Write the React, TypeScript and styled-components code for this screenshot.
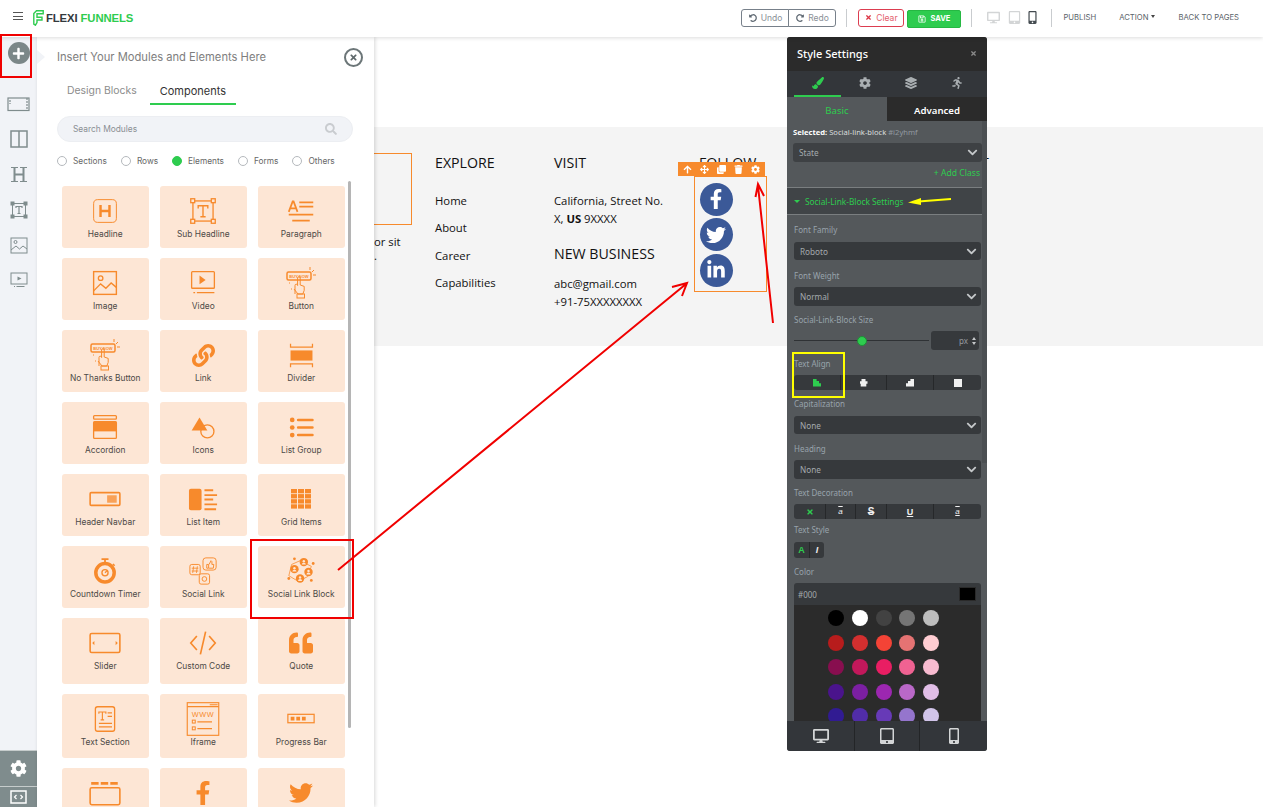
import React from "react";
import styled, { createGlobalStyle } from "styled-components";
import {
  FaArrowUp,
  FaArrowsAlt,
  FaChevronDown,
  FaClone,
  FaCog,
  FaDesktop,
  FaFacebookF,
  FaLayerGroup,
  FaLink,
  FaLinkedinIn,
  FaMobileAlt,
  FaPaintBrush,
  FaPlus,
  FaQuoteLeft,
  FaRedoAlt,
  FaRegSave,
  FaRunning,
  FaSearch,
  FaTabletAlt,
  FaTimes,
  FaTrash,
  FaTwitter,
  FaUndoAlt,
} from "react-icons/fa";

const ORANGE = "#f78a2c";
const GREEN = "#2ecc4f";
const GREY = "#7f8c8d";

const GlobalStyle = createGlobalStyle`
  html, body {
    margin: 0;
    padding: 0;
    background: #ffffff;
  }
  * {
    box-sizing: border-box;
  }
`;

const Page = styled.div`
  position: relative;
  width: 1263px;
  height: 807px;
  overflow: hidden;
  display: flex;
  flex-direction: column;
  font-family: Inter, "Liberation Sans", sans-serif;
`;

/* top bar */
const TopBar = styled.header`
  height: 37px;
  flex: none;
  display: flex;
  align-items: center;
  background: #ffffff;
  padding: 0 24px 2px 13px;
  box-shadow: 0 1px 4px rgba(0, 0, 0, 0.14);
  position: relative;
  z-index: 3;
`;

const Burger = styled.div`
  width: 10px;
  height: 8px;
  border-top: 1px solid #555;
  border-bottom: 1px solid #555;
  position: relative;
  margin-top: -3px;
  &::after {
    content: "";
    position: absolute;
    left: 0;
    right: 0;
    top: 2.5px;
    height: 1px;
    background: #555;
  }
`;

const Logo = styled.div`
  display: flex;
  align-items: center;
  margin: 1px 0 0 10px;
  gap: 2px;
  font-family: "Liberation Sans", sans-serif;
  font-weight: 700;
  font-size: 11.3px;
  color: #33393d;
  letter-spacing: -0.1px;
`;

const LogoGreen = styled.span`
  color: ${GREEN};
`;

const TopActions = styled.div`
  margin-left: auto;
  display: flex;
  align-items: center;
`;

const HistoryButton = styled.button<{ $right?: boolean }>`
  width: 48px;
  height: 18px;
  border: 1px solid #77808a;
  border-radius: ${(p) => (p.$right ? "0 3px 3px 0" : "3px 0 0 3px")};
  background: #fff;
  color: #8a9097;
  font-family: inherit;
  font-size: 8.5px;
  display: flex;
  align-items: center;
  justify-content: center;
  gap: 4px;
  padding: 0;
  margin-left: ${(p) => (p.$right ? "-1px" : "0")};
  svg {
    color: #5c6670;
    font-size: 8px;
  }
`;

const Sep = styled.div<{ $left: number }>`
  width: 1px;
  height: 18px;
  background: #c9cccf;
  margin-left: ${(p) => p.$left}px;
`;

const ClearButton = styled.button`
  width: 46px;
  height: 18px;
  margin-left: 11px;
  border: 1px solid #dc3d50;
  border-radius: 3px;
  background: #fff;
  color: #e4606d;
  font-family: inherit;
  font-size: 8.5px;
  display: flex;
  align-items: center;
  justify-content: center;
  gap: 4px;
  padding: 0;
  svg {
    color: #dc3545;
    font-size: 7px;
  }
`;

const SaveButton = styled.button`
  width: 54px;
  height: 18px;
  margin: 2px 0 0 3px;
  border: 1px solid #26b843;
  border-radius: 2px;
  background: ${GREEN};
  color: #fff;
  font-family: inherit;
  font-weight: 700;
  font-size: 7.5px;
  display: flex;
  align-items: center;
  justify-content: center;
  gap: 4px;
  padding: 0;
  svg {
    font-size: 8px;
  }
`;

const DeviceSlot = styled.div<{ $left: number; $on?: boolean }>`
  margin-left: ${(p) => p.$left}px;
  display: flex;
  color: ${(p) => (p.$on ? "#444b50" : "#d3d5d6")};
  font-size: 13px;
`;

const TopLink = styled.a<{ $left: number }>`
  margin-left: ${(p) => p.$left}px;
  font-size: 7.7px;
  color: #5a6268;
  white-space: nowrap;
`;

const Caret = styled.span`
  display: inline-block;
  margin: 0 0 2px 2px;
  border-left: 2.5px solid transparent;
  border-right: 2.5px solid transparent;
  border-top: 3px solid #444;
`;

/* workspace */
const Workspace = styled.div`
  flex: 1;
  display: flex;
  min-height: 0;
`;

const Rail = styled.nav`
  width: 37px;
  flex: none;
  background: #f1f3f7;
  display: flex;
  flex-direction: column;
  align-items: center;
`;

const PlusCircle = styled.div`
  width: 22px;
  height: 22px;
  margin-top: 5px;
  border-radius: 50%;
  background: #7b8788;
  color: #fff;
  font-size: 13px;
  display: flex;
  align-items: center;
  justify-content: center;
`;

const RailIcons = styled.div`
  margin-top: 33px;
  height: 191px;
  display: flex;
  flex-direction: column;
  align-items: center;
  justify-content: space-between;
`;

const RailFooter = styled.div`
  margin-top: auto;
  width: 100%;
`;

const RailButton = styled.div<{ $h: number }>`
  height: ${(p) => p.$h}px;
  background: ${GREY};
  border-top: 1px solid #c6cccc;
  color: #fff;
  display: flex;
  align-items: center;
  justify-content: center;
  font-size: 17px;
`;

const ModulePanel = styled.aside`
  width: 337px;
  flex: none;
  position: relative;
  background: #ffffff;
  box-shadow: 1px 0 4px rgba(0, 0, 0, 0.16);
  z-index: 2;
  padding: 10px 0 0 20px;
  &::before {
    content: "";
    position: absolute;
    left: 0;
    top: 13px;
    border-left: 8px solid #f1f3f7;
    border-top: 7px solid transparent;
    border-bottom: 7px solid transparent;
  }
`;

const PanelHead = styled.div`
  height: 20px;
  width: 297px;
  display: flex;
  align-items: center;
  justify-content: space-between;
  font-size: 11.2px;
  color: #7e7e7e;
`;

const CloseCircle = styled.div`
  width: 19px;
  height: 19px;
  border: 2px solid #6c7678;
  border-radius: 50%;
  color: #5f696b;
  font-size: 9px;
  display: flex;
  align-items: center;
  justify-content: center;
  margin-right: -9px;
`;

const Tabs = styled.div`
  display: flex;
  gap: 3px;
  margin-top: 13px;
  height: 25px;
`;

const Tab = styled.div<{ $active?: boolean }>`
  padding: 4px 10px 0;
  font-size: ${(p) => (p.$active ? 11 : 10.4)}px;
  color: ${(p) => (p.$active ? "#333" : "#8c8c8c")};
  border-bottom: 2px solid ${(p) => (p.$active ? GREEN : "transparent")};
`;

const SearchBox = styled.div`
  margin-top: 11px;
  width: 296px;
  height: 26px;
  border-radius: 13px;
  background: #f1f3f7;
  border: 1px solid #eceef2;
  display: flex;
  align-items: center;
  justify-content: space-between;
  padding: 0 15px;
  font-size: 8.4px;
  color: #8a8f94;
  svg {
    font-size: 12px;
    color: #c9ccd0;
  }
`;

const RadioRow = styled.div`
  margin-top: 13px;
  height: 12px;
  display: flex;
  align-items: center;
  gap: 14px;
`;

const RadioItem = styled.label`
  display: flex;
  align-items: center;
  gap: 6px;
  font-size: 8.3px;
  color: #666;
`;

const RadioDot = styled.span<{ $on?: boolean }>`
  width: 10px;
  height: 10px;
  border-radius: 50%;
  border: 1px solid ${(p) => (p.$on ? GREEN : "#b5b9bd")};
  background: ${(p) => (p.$on ? GREEN : "#fff")};
`;

const CardGrid = styled.div`
  margin: 19px 0 0 5px;
  display: grid;
  grid-template-columns: repeat(3, 86.5px);
  grid-template-rows: repeat(6, 62px) 66px 64px 62px;
  column-gap: 11.5px;
  row-gap: 10px;
`;

const Card = styled.div`
  background: #fde6d5;
  border-radius: 3px;
  display: flex;
  flex-direction: column;
  align-items: center;
  padding-top: 11px;
`;

const CardIcon = styled.div`
  height: 28px;
  display: flex;
  align-items: center;
  justify-content: center;
  color: ${ORANGE};
`;

const CardLabel = styled.div`
  margin-top: 3px;
  font-size: 8.4px;
  line-height: 12px;
  color: #4d4a47;
  white-space: nowrap;
`;

const PanelScroll = styled.div`
  position: absolute;
  left: 311px;
  top: 144px;
  width: 3px;
  height: 547px;
  background: #b5b5b5;
  border-radius: 2px;
`;

/* canvas with the footer being edited */
const Canvas = styled.main`
  flex: 1;
  position: relative;
  padding-top: 90px;
  min-width: 0;
`;

const FooterBand = styled.section`
  height: 219px;
  background: #f4f4f4;
  display: flex;
  padding-top: 26px;
  font-family: "Open Sans", "Liberation Sans", sans-serif;
  color: #111;
  font-size: 11.3px;
`;

const AboutCol = styled.div`
  width: 61px;
  flex: none;
`;

const LogoFrame = styled.div`
  width: 38px;
  height: 72px;
  border: 1px solid ${ORANGE};
  border-left: none;
`;

const AboutText = styled.p`
  margin: 10px 0 0;
  line-height: 14px;
`;

const FooterCol = styled.div<{ $w: number }>`
  width: ${(p) => p.$w}px;
  flex: none;
`;

const FooterHeading = styled.h4<{ $top?: number }>`
  margin: ${(p) => p.$top ?? 0}px 0 0;
  font-size: 14.2px;
  line-height: 20px;
  font-weight: 500;
  white-space: nowrap;
`;

const LinkList = styled.ul`
  list-style: none;
  margin: 19px 0 0;
  padding: 0;
  display: flex;
  flex-direction: column;
  gap: 9.3px;
  line-height: 18px;
`;

const FooterLines = styled.p<{ $top: number }>`
  margin: ${(p) => p.$top}px 0 0;
  line-height: 17.5px;
  white-space: nowrap;
`;

const SocialFrame = styled.div`
  position: relative;
  margin: 3px 0 0 -5px;
  width: 73px;
  height: 116px;
  border: 1px solid ${ORANGE};
  padding: 5.5px 0 0 4.5px;
  display: flex;
  flex-direction: column;
  gap: 2.5px;
`;

const BlockToolbar = styled.div`
  position: absolute;
  left: -17px;
  top: -15px;
  width: 87px;
  height: 14px;
  background: ${ORANGE};
  color: #fff;
  font-size: 9px;
  display: flex;
  align-items: center;
  justify-content: space-around;
  padding: 0 1px;
`;

const SocialCircle = styled.a`
  width: 33px;
  height: 33px;
  flex: none;
  border-radius: 50%;
  background: #3b5998;
  color: #fff;
  font-size: 20px;
  display: flex;
  align-items: center;
  justify-content: center;
`;

/* floating style panel */
const StylePanel = styled.div`
  position: absolute;
  left: 413px;
  top: 0;
  width: 200px;
  height: 714px;
  border-radius: 3px;
  overflow: hidden;
  background: #54585b;
  display: flex;
  flex-direction: column;
  font-family: "Noto Sans", "Liberation Sans", sans-serif;
  z-index: 2;
`;

const StyleHead = styled.div`
  height: 34px;
  flex: none;
  background: #2b2b2b;
  color: #fff;
  font-size: 11px;
  font-weight: 500;
  display: flex;
  align-items: center;
  justify-content: space-between;
  padding: 0 10px 2px;
  svg {
    font-size: 7px;
    color: #8b8b8b;
  }
`;

const IconTabs = styled.div`
  height: 26px;
  flex: none;
  background: #33363a;
  display: grid;
  grid-template-columns: 47px 47px 46px 46px;
  padding-left: 7px;
`;

const IconTab = styled.div<{ $active?: boolean }>`
  display: flex;
  align-items: center;
  justify-content: center;
  font-size: 12px;
  color: ${(p) => (p.$active ? GREEN : "#a9aeb1")};
  border-bottom: 2px solid ${(p) => (p.$active ? GREEN : "transparent")};
`;

const ModeTabs = styled.div`
  height: 24px;
  flex: none;
  display: grid;
  grid-template-columns: 100px 100px;
`;

const ModeTab = styled.div<{ $active?: boolean }>`
  display: flex;
  align-items: center;
  justify-content: center;
  padding-top: 2px;
  font-size: 9.6px;
  font-weight: ${(p) => (p.$active ? 400 : 600)};
  background: ${(p) => (p.$active ? "#54585b" : "#2b2b2b")};
  color: ${(p) => (p.$active ? GREEN : "#fff")};
`;

const StyleBody = styled.div`
  flex: 1;
  min-height: 0;
  overflow: hidden;
  position: relative;
`;

const BodyScroll = styled.div`
  position: absolute;
  right: 0;
  top: 0;
  width: 5px;
  height: 342px;
  background: #4b4f52;
`;

const SelectedLine = styled.div`
  margin: 5px 0 0 6px;
  height: 12px;
  line-height: 12px;
  font-size: 7.6px;
  color: #d9dcdd;
  white-space: nowrap;
  b {
    color: #fff;
  }
  span {
    color: #9299a0;
  }
`;

const Select = styled.div<{ $top?: number; $h?: number; $state?: boolean }>`
  margin: ${(p) => p.$top ?? 0}px 6px 0 ${(p) => (p.$state ? 6 : 7)}px;
  width: ${(p) => (p.$state ? 189 : 187)}px;
  height: ${(p) => p.$h ?? 19}px;
  background: ${(p) => (p.$state ? "#3e4144" : "#36393c")};
  border-radius: 3px;
  display: flex;
  align-items: center;
  justify-content: space-between;
  padding: 0 4px 0 6px;
  font-size: 8.2px;
  color: #a4aaad;
  svg {
    font-size: 11px;
    color: #c5c8ca;
  }
`;

const AddClass = styled.div`
  margin: 4px 7px 0 0;
  height: 14px;
  line-height: 14px;
  text-align: right;
  font-size: 8.6px;
  color: ${GREEN};
`;

const SectionHead = styled.div`
  margin-top: 7px;
  height: 28px;
  background: #404447;
  border-top: 1px solid #7a7e80;
  border-bottom: 1px solid #7a7e80;
  display: flex;
  align-items: center;
  gap: 5px;
  padding-left: 7px;
  font-size: 8.3px;
  color: ${GREEN};
  white-space: nowrap;
`;

const SectionCaret = styled.span`
  border-left: 3px solid transparent;
  border-right: 3px solid transparent;
  border-top: 3.5px solid ${GREEN};
`;

const FieldLabel = styled.div<{ $top?: number; $bottom?: number }>`
  margin: ${(p) => p.$top ?? 8}px 0 ${(p) => p.$bottom ?? 5}px 7px;
  height: 12px;
  line-height: 12px;
  font-size: 8px;
  color: #98a3ab;
  white-space: nowrap;
`;

const SliderRow = styled.div`
  display: flex;
  align-items: center;
  margin-left: 7px;
  width: 185px;
  height: 19px;
`;

const SliderTrack = styled.div`
  position: relative;
  width: 135px;
  height: 1px;
  background: #2f3235;
  margin-right: 2px;
`;

const SliderThumb = styled.span`
  position: absolute;
  left: 63px;
  top: -4.5px;
  width: 10px;
  height: 10px;
  border-radius: 50%;
  background: ${GREEN};
  border: 1px solid #1f8f37;
`;

const UnitInput = styled.div`
  flex: 1;
  height: 19px;
  background: #36393c;
  border-radius: 3px;
  display: flex;
  align-items: center;
  justify-content: flex-end;
  gap: 4px;
  padding-right: 3px;
  font-size: 8px;
  color: #969ca0;
`;

const Spinner = styled.span`
  display: flex;
  flex-direction: column;
  gap: 2px;
  &::before,
  &::after {
    content: "";
    border-left: 2.5px solid transparent;
    border-right: 2.5px solid transparent;
  }
  &::before {
    border-bottom: 3px solid #c5c8ca;
  }
  &::after {
    border-top: 3px solid #c5c8ca;
  }
`;

const SegmentGroup = styled.div<{ $cols: string; $w?: number; $h?: number }>`
  margin-left: 7px;
  width: ${(p) => p.$w ?? 187}px;
  height: ${(p) => p.$h ?? 15}px;
  display: grid;
  grid-template-columns: ${(p) => p.$cols};
  background: #36393c;
  border-radius: 3px;
  overflow: hidden;
`;

const Segment = styled.div<{ $on?: boolean }>`
  display: flex;
  align-items: center;
  justify-content: center;
  color: ${(p) => (p.$on ? GREEN : "#f0f0f0")};
  font-size: 9px;
  font-weight: 700;
  font-family: "Liberation Sans", sans-serif;
  & + & {
    border-left: 1px solid #26282a;
  }
`;

const AlignBlock = styled.span<{ $kind: "left" | "center" | "right" | "full" }>`
  display: block;
  width: 8px;
  height: 8px;
  background: ${(p) => (p.$kind === "left" ? GREEN : "#f0f0f0")};
  clip-path: ${(p) =>
    p.$kind === "left"
      ? "polygon(0 0, 45% 0, 45% 30%, 75% 30%, 75% 60%, 100% 60%, 100% 100%, 0 100%)"
      : p.$kind === "center"
      ? "polygon(25% 0, 75% 0, 75% 35%, 100% 35%, 100% 65%, 85% 65%, 85% 100%, 15% 100%, 15% 65%, 0 65%, 0 35%, 25% 35%)"
      : p.$kind === "right"
      ? "polygon(55% 0, 100% 0, 100% 100%, 0 100%, 0 60%, 25% 60%, 25% 30%, 55% 30%)"
      : "none"};
`;

const Overlined = styled.span`
  text-decoration: overline;
  font-style: italic;
  font-weight: 400;
  font-size: 8px;
`;

const Struck = styled.span`
  text-decoration: line-through;
  font-size: 10px;
`;

const Underlined = styled.span`
  text-decoration: underline;
`;

const BothLined = styled.span`
  text-decoration: underline overline;
  font-style: italic;
  font-weight: 400;
  font-size: 8px;
`;

const ColorInput = styled.div`
  margin-left: 7px;
  width: 187px;
  height: 22px;
  background: #36393c;
  border-radius: 3px 3px 0 0;
  display: flex;
  align-items: center;
  justify-content: space-between;
  padding: 0 5px 0 4px;
  font-size: 8px;
  color: #a4aaad;
`;

const BlackSwatch = styled.span`
  width: 17px;
  height: 14px;
  background: #000;
  border: 1px solid #2a2a2a;
`;

const Palette = styled.div`
  margin-left: 7px;
  width: 187px;
  height: 117px;
  background: #2b2b2b;
  overflow: hidden;
  padding: 5px 0 0 34px;
  display: grid;
  grid-template-columns: repeat(5, 16px);
  grid-auto-rows: 16px;
  column-gap: 7.75px;
  row-gap: 8.6px;
`;

const Swatch = styled.span<{ $color: string }>`
  border-radius: 50%;
  background: ${(p) => p.$color};
`;

const StyleFooter = styled.div`
  height: 30px;
  flex: none;
  background: #33363a;
  display: grid;
  grid-template-columns: 67px 65px 68px;
`;

const DeviceTab = styled.div`
  display: flex;
  align-items: center;
  justify-content: center;
  color: #d3d5d6;
  font-size: 16px;
  & + & {
    border-left: 1px solid #232527;
  }
`;

/* red and yellow marks drawn over the screenshot */
const Annotations = styled.svg`
  position: absolute;
  left: 0;
  top: 0;
  pointer-events: none;
  z-index: 5;
`;

const Glyph: React.FC<{ size?: number; children: React.ReactNode }> = ({ size = 26, children }) => (
  <svg width={size} height={size} viewBox="0 0 32 32" fill="none" stroke={ORANGE} strokeWidth={1.5}>
    {children}
  </svg>
);

const handIcon = (
  <Glyph size={32}>
    <rect x="2" y="5" width="24" height="8" rx="1.5" />
    <text x="14" y="10.8" textAnchor="middle" fontSize="4" fontWeight="700" fill={ORANGE} stroke="none" fontFamily="Liberation Sans">
      BUY NOW
    </text>
    <path d="M10 27v-8.5a1.3 1.3 0 0 1 2.6 0V11a1.3 1.3 0 0 1 2.6 0v7l4 1.4v4l-1.4 3.6H13l-4-5" strokeWidth="1" />
    <rect x="12" y="27" width="7.5" height="4" strokeWidth="1" />
    <path d="M27 5l2-2M28 8h3M25 3V0" strokeWidth="1" />
    <path d="M4 16h1M6 22h1" strokeWidth="1" />
  </Glyph>
);

const gridCells: [number, number][] = [];
for (let r = 0; r < 4; r++) for (let c = 0; c < 3; c++) gridCells.push([c, r]);

const socialNodes: [number, number][] = [
  [19, 6.5],
  [9, 14],
  [24, 17],
  [15, 24],
];

// the last row is cut by the window before its labels start
type Module = { key: string; label?: string; icon: React.ReactNode };

const modules: Module[] = [
  {
    key: "headline",
    label: "Headline",
    icon: (
      <Glyph>
        <rect x="2" y="2" width="28" height="28" rx="5" strokeWidth="1.2" />
        <path d="M10.5 8.5v15M21.5 8.5v15M10.5 16h11" strokeWidth="3" />
      </Glyph>
    ),
  },
  {
    key: "subheadline",
    label: "Sub Headline",
    icon: (
      <Glyph size={28}>
        <rect x="4.5" y="4.5" width="23" height="23" />
        <rect x="2" y="2" width="4.5" height="4.5" fill="#fde6d5" />
        <rect x="25.5" y="2" width="4.5" height="4.5" fill="#fde6d5" />
        <rect x="2" y="25.5" width="4.5" height="4.5" fill="#fde6d5" />
        <rect x="25.5" y="25.5" width="4.5" height="4.5" fill="#fde6d5" />
        <path d="M10.5 13v-3h11v3M16 10v12.5M13 22.5h6" strokeWidth="1.6" />
      </Glyph>
    ),
  },
  {
    key: "paragraph",
    label: "Paragraph",
    icon: (
      <Glyph size={28}>
        <path d="M2 17l4.5-12h1L12 17M3.7 13h7" strokeWidth="2" />
        <path d="M14 6h16M14 11h16M2 20h28M6 27h20" strokeWidth="2" />
      </Glyph>
    ),
  },
  {
    key: "image",
    label: "Image",
    icon: (
      <Glyph size={28}>
        <rect x="3" y="3" width="26" height="26" strokeWidth="1.6" />
        <circle cx="11" cy="10.5" r="2.6" />
        <path d="M3 25l8-8 6 5 6-6 6 5" strokeWidth="1.6" />
      </Glyph>
    ),
  },
  {
    key: "video",
    label: "Video",
    icon: (
      <Glyph size={28}>
        <rect x="3" y="3" width="26" height="19" rx="1" />
        <path d="M12 7.5l7 5-7 5z" fill={ORANGE} stroke="none" />
        <path d="M5 27h2M9 27h20" />
      </Glyph>
    ),
  },
  { key: "button", label: "Button", icon: handIcon },
  { key: "nothanks", label: "No Thanks Button", icon: handIcon },
  { key: "link", label: "Link", icon: <FaLink size={23} /> },
  {
    key: "divider",
    label: "Divider",
    icon: (
      <Glyph size={27}>
        <path d="M3 2v4h26V2M3 30v-4h26v4" />
        <rect x="3" y="10" width="26" height="12" fill={ORANGE} stroke="none" />
      </Glyph>
    ),
  },
  {
    key: "accordion",
    label: "Accordion",
    icon: (
      <Glyph size={28}>
        <rect x="3" y="3" width="26" height="4" rx="1" />
        <rect x="3" y="10" width="26" height="19" rx="1" />
        <rect x="3" y="10" width="26" height="11" fill={ORANGE} stroke="none" />
      </Glyph>
    ),
  },
  {
    key: "icons",
    label: "Icons",
    icon: (
      <Glyph size={28}>
        <circle cx="21" cy="21" r="7.5" />
        <path d="M12 5l9 15H3z" fill={ORANGE} stroke="none" />
      </Glyph>
    ),
  },
  {
    key: "listgroup",
    label: "List Group",
    icon: (
      <Glyph size={27}>
        <circle cx="5" cy="7" r="2.8" fill={ORANGE} stroke="none" />
        <circle cx="5" cy="16" r="2.8" fill={ORANGE} stroke="none" />
        <circle cx="5" cy="25" r="2.8" fill={ORANGE} stroke="none" />
        <path d="M12 7h17M12 16h17M12 25h17" strokeWidth="3" strokeLinecap="round" />
      </Glyph>
    ),
  },
  {
    key: "navbar",
    label: "Header Navbar",
    icon: (
      <Glyph size={34}>
        <rect x="2" y="10" width="28" height="12" rx="1" />
        <rect x="18" y="12.5" width="9" height="7" fill={ORANGE} stroke="none" opacity="0.75" />
      </Glyph>
    ),
  },
  {
    key: "listitem",
    label: "List Item",
    icon: (
      <Glyph size={31}>
        <rect x="1" y="5" width="13" height="22" rx="2" fill={ORANGE} stroke="none" />
        <path d="M17 6.5h9M17 11.5h13M17 16h9M17 21h13M17 26h12" strokeWidth="2" />
      </Glyph>
    ),
  },
  {
    key: "grid",
    label: "Grid Items",
    icon: (
      <svg width="20" height="20" viewBox="0 0 20 20" fill={ORANGE}>
        {gridCells.map(([c, r]) => (
          <rect key={`${c}-${r}`} x={c * 7} y={r * 5.1} width="6" height="4.3" />
        ))}
      </svg>
    ),
  },
  {
    key: "countdown",
    label: "Countdown Timer",
    icon: (
      <Glyph size={28}>
        <path d="M12 2.5h8M16 3v4M25 8l2 2" strokeWidth="2" />
        <circle cx="16" cy="18" r="10.5" strokeWidth="4" />
        <circle cx="16" cy="18" r="3.5" />
        <path d="M16 18l3-3" />
      </Glyph>
    ),
  },
  {
    key: "sociallink",
    label: "Social Link",
    icon: (
      <Glyph size={30}>
        <rect x="16" y="2" width="14" height="13" rx="3" strokeWidth="1" />
        <path d="M20 9h2v4h-2zM22.5 9l2-4 1 1v3h2l-.5 4h-4.500" strokeWidth="1" />
        <rect x="2" y="9" width="11" height="11" rx="2" strokeWidth="1" />
        <path d="M6 11l-1 7M10 11l-1 7M4 13h7M4 16h7" strokeWidth="0.9" />
        <rect x="12" y="19" width="11" height="11" rx="2" strokeWidth="1" />
        <circle cx="17.500" cy="24.500" r="2.500" strokeWidth="1" />
      </Glyph>
    ),
  },
  {
    key: "socialblock",
    label: "Social Link Block",
    icon: (
      <Glyph size={30}>
        <path d="M6 9l9-4 12 6-4 11-10 5-10-6z" strokeWidth="0.8" />
        {socialNodes.map(([x, y]) => (
          <g key={`${x}-${y}`}>
            <circle cx={x} cy={y} r="4.5" fill={ORANGE} stroke="none" />
            <circle cx={x} cy={y - 1} r="1.3" fill="#fde6d5" stroke="none" />
            <path d={`M${x - 2.2} ${y + 2.6}a2.2 2 0 0 1 4.4 0z`} fill="#fde6d5" stroke="none" />
          </g>
        ))}
        <circle cx="9" cy="3" r="1.500" fill={ORANGE} stroke="none" />
        <circle cx="29" cy="8" r="1.500" fill={ORANGE} stroke="none" />
        <circle cx="3" cy="24" r="1.500" fill={ORANGE} stroke="none" />
        <circle cx="27" cy="26" r="1.500" fill={ORANGE} stroke="none" />
      </Glyph>
    ),
  },
  {
    key: "slider",
    label: "Slider",
    icon: (
      <Glyph size={34}>
        <rect x="2" y="7" width="28" height="18" rx="1.500" />
        <path d="M6 14v4l-2-2zM26 14v4l2-2z" fill={ORANGE} stroke="none" />
      </Glyph>
    ),
  },
  {
    key: "code",
    label: "Custom Code",
    icon: (
      <Glyph size={28}>
        <path d="M9 8l-7 8 7 8M23 8l7 8-7 8M19 3l-6 26" strokeWidth="1.900" />
      </Glyph>
    ),
  },
  { key: "quote", label: "Quote", icon: <FaQuoteLeft size={24} /> },
  {
    key: "textsection",
    label: "Text Section",
    icon: (
      <Glyph size={28}>
        <rect x="5" y="2" width="22" height="28" rx="2.500" />
        <path d="M9 10V8h8v2M13 8v9M11 17h4M19 9h5M19 13h5M9 21h15M9 25h15" strokeWidth="1.300" />
      </Glyph>
    ),
  },
  {
    key: "iframe",
    label: "Iframe",
    icon: (
      <Glyph size={36}>
        <rect x="2" y="1.500" width="28" height="29" strokeWidth="1" />
        <path d="M2 5h28M22 3.300h7" strokeWidth="1" />
        <text x="16" y="14" textAnchor="middle" fontSize="6.500" fill={ORANGE} stroke="none" fontFamily="Liberation Sans" letterSpacing="0.500">
          WWW
        </text>
        <rect x="6.500" y="17" width="2.600" height="2.600" strokeWidth="0.900" />
        <rect x="6.500" y="23" width="2.600" height="2.600" strokeWidth="0.900" />
        <path d="M11 18.500h13M11 24.500h13" strokeWidth="1" />
      </Glyph>
    ),
  },
  {
    key: "progress",
    label: "Progress Bar",
    icon: (
      <Glyph size={30}>
        <rect x="2" y="11" width="28" height="9" strokeWidth="1.300" />
        <path d="M5 13.500h4v4H5zM11 13.500h4v4h-4zM17 13.500h4v4h-4z" fill={ORANGE} stroke="none" />
      </Glyph>
    ),
  },
  {
    key: "tabs",
    icon: (
      <Glyph size={34}>
        <rect x="2" y="11" width="28" height="16" rx="1.500" />
        <path d="M3 7h7M12 7h7M21 7h7" strokeWidth="2.500" />
      </Glyph>
    ),
  },
  { key: "facebook", icon: <FaFacebookF size={24} /> },
  { key: "twitter", icon: <FaTwitter size={24} /> },
];

const palette = [
  "#000000", "#ffffff", "#424242", "#757575", "#bdbdbd",
  "#b71c1c", "#d32f2f", "#f44336", "#e57373", "#ffcdd2",
  "#880e4f", "#c2185b", "#e91e63", "#f06292", "#f8bbd0",
  "#4a148c", "#7b1fa2", "#9c27b0", "#ba68c8", "#e1bee7",
  "#311b92", "#512da8", "#673ab7", "#9575cd", "#d1c4e9",
];

const radios = ["Sections", "Rows", "Elements", "Forms", "Others"];

const App: React.FC = () => {
  return (
    <Page>
      <GlobalStyle />
      <TopBar>
        <Burger />
        <Logo>
          <svg width="11" height="16" viewBox="0 0 11 16" fill="none" stroke={GREEN} strokeWidth="1.400">
            <path d="M.8 3.500L3.500.8h6.700v3H4v3.400h5v2.800H4v2.500l-1.600 2.700-1.600-1z" />
          </svg>
          <span>
            FLEXI <LogoGreen>FUNNELS</LogoGreen>
          </span>
        </Logo>
        <TopActions>
          <HistoryButton>
            <FaUndoAlt /> Undo
          </HistoryButton>
          <HistoryButton $right>
            <FaRedoAlt /> Redo
          </HistoryButton>
          <Sep $left={10} />
          <ClearButton>
            <FaTimes /> Clear
          </ClearButton>
          <SaveButton>
            <FaRegSave /> SAVE
          </SaveButton>
          <Sep $left={10} />
          <DeviceSlot $left={15}>
            <FaDesktop />
          </DeviceSlot>
          <DeviceSlot $left={8}>
            <FaTabletAlt />
          </DeviceSlot>
          <DeviceSlot $left={5} $on>
            <FaMobileAlt />
          </DeviceSlot>
          <Sep $left={12} />
          <TopLink $left={11}>PUBLISH</TopLink>
          <TopLink $left={23}>
            ACTION
            <Caret />
          </TopLink>
          <TopLink $left={24}>BACK TO PAGES</TopLink>
        </TopActions>
      </TopBar>

      <Workspace>
        <Rail>
          <PlusCircle>
            <FaPlus />
          </PlusCircle>
          <RailIcons>
            <svg width="23" height="15" viewBox="0 0 23 15" fill="none" stroke={GREY} strokeWidth="1.200">
              <rect x="1" y="1" width="21" height="12.500" />
              <path d="M3 3v4M20 1v12.500" strokeDasharray="2 1" />
            </svg>
            <svg width="18" height="18" viewBox="0 0 18 18" fill="none" stroke={GREY} strokeWidth="1.500">
              <rect x="1" y="1" width="16" height="16" />
              <path d="M9 1v16" />
            </svg>
            <svg width="18" height="17" viewBox="0 0 18 17" fill="none" stroke={GREY}>
              <path d="M4.500 2v13M13.500 2v13M4.500 8.500h9" strokeWidth="2" />
              <path d="M1 1.500h7M10 1.500h7M1 15.500h7M10 15.500h7" strokeWidth="1.200" />
            </svg>
            <svg width="18" height="18" viewBox="0 0 18 18" fill="none" stroke={GREY}>
              <rect x="2.500" y="2.500" width="13" height="13" />
              <rect x="1" y="1" width="3" height="3" fill={GREY} />
              <rect x="14" y="1" width="3" height="3" fill={GREY} />
              <rect x="1" y="14" width="3" height="3" fill={GREY} />
              <rect x="14" y="14" width="3" height="3" fill={GREY} />
              <path d="M6 7V5.500h6V7M9 5.500v7M7.500 12.500h3" strokeWidth="1.200" />
            </svg>
            <svg width="18" height="17" viewBox="0 0 18 17" fill="none" stroke={GREY}>
              <rect x="1" y="1" width="16" height="15" />
              <circle cx="5.500" cy="5" r="1.500" />
              <path d="M1 13l5-4 3.500 3 3.500-3 4 3" />
            </svg>
            <svg width="18" height="16" viewBox="0 0 18 16" fill="none" stroke={GREY}>
              <rect x="1" y="1" width="16" height="11" />
              <path d="M7.500 4.500l4 2-4 2z" fill={GREY} stroke="none" />
              <path d="M4 14.500h1M6.500 14.500h8" />
            </svg>
          </RailIcons>
          <RailFooter>
            <RailButton $h={36}>
              <FaCog />
            </RailButton>
            <RailButton $h={21}>
              <svg width="17" height="14" viewBox="0 0 17 14" fill="none" stroke="#fff" strokeWidth="1.500">
                <rect x="1" y="1" width="15" height="12" />
                <path d="M6.500 5L4.500 7l2 2M10.500 5l2 2-2 2" strokeWidth="1.200" />
              </svg>
            </RailButton>
          </RailFooter>
        </Rail>

        <ModulePanel>
          <PanelHead>
            Insert Your Modules and Elements Here
            <CloseCircle>
              <FaTimes />
            </CloseCircle>
          </PanelHead>
          <Tabs>
            <Tab>Design Blocks</Tab>
            <Tab $active>Components</Tab>
          </Tabs>
          <SearchBox>
            Search Modules
            <FaSearch />
          </SearchBox>
          <RadioRow>
            {radios.map((name) => (
              <RadioItem key={name}>
                <RadioDot $on={name === "Elements"} />
                {name}
              </RadioItem>
            ))}
          </RadioRow>
          <CardGrid>
            {modules.map((m) => (
              <Card key={m.key}>
                <CardIcon>{m.icon}</CardIcon>
                {m.label && <CardLabel>{m.label}</CardLabel>}
              </Card>
            ))}
          </CardGrid>
          <PanelScroll />
        </ModulePanel>

        <Canvas>
          <FooterBand>
            <AboutCol>
              <LogoFrame />
              <AboutText>
                or sit
                <br />.
              </AboutText>
            </AboutCol>
            <FooterCol $w={119}>
              <FooterHeading>EXPLORE</FooterHeading>
              <LinkList>
                <li>Home</li>
                <li>About</li>
                <li>Career</li>
                <li>Capabilities</li>
              </LinkList>
            </FooterCol>
            <FooterCol $w={145}>
              <FooterHeading>VISIT</FooterHeading>
              <FooterLines $top={19}>
                California, Street No.
                <br />
                X, <b>US</b> 9XXXX
              </FooterLines>
              <FooterHeading $top={17}>NEW BUSINESS</FooterHeading>
              <FooterLines $top={11}>
                abc@gmail.com
                <br />
                +91-75XXXXXXXX
              </FooterLines>
            </FooterCol>
            <FooterCol $w={282}>
              <FooterHeading>FOLLOW</FooterHeading>
              <SocialFrame>
                <BlockToolbar>
                  <FaArrowUp />
                  <FaArrowsAlt />
                  <FaClone />
                  <FaTrash />
                  <FaCog />
                </BlockToolbar>
                <SocialCircle>
                  <FaFacebookF />
                </SocialCircle>
                <SocialCircle>
                  <FaTwitter />
                </SocialCircle>
                <SocialCircle>
                  <FaLinkedinIn />
                </SocialCircle>
              </SocialFrame>
            </FooterCol>
            {/* only the tail of this heading shows past the style panel */}
            <FooterCol $w={12}>
              <FooterHeading>T</FooterHeading>
            </FooterCol>
          </FooterBand>

          <StylePanel>
            <StyleHead>
              Style Settings
              <FaTimes />
            </StyleHead>
            <IconTabs>
              <IconTab $active>
                <FaPaintBrush />
              </IconTab>
              <IconTab>
                <FaCog />
              </IconTab>
              <IconTab>
                <FaLayerGroup />
              </IconTab>
              <IconTab>
                <FaRunning />
              </IconTab>
            </IconTabs>
            <ModeTabs>
              <ModeTab $active>Basic</ModeTab>
              <ModeTab>Advanced</ModeTab>
            </ModeTabs>
            <StyleBody>
              <BodyScroll />
              <SelectedLine>
                <b>Selected:</b> Social-link-block <span>#i2yhmf</span>
              </SelectedLine>
              <Select $state $top={5}>
                State
                <FaChevronDown />
              </Select>
              <AddClass>+ Add Class</AddClass>
              <SectionHead>
                <SectionCaret />
                Social-Link-Block Settings
              </SectionHead>

              <FieldLabel $top={9} $bottom={6}>Font Family</FieldLabel>
              <Select $h={18}>
                Roboto
                <FaChevronDown />
              </Select>
              <FieldLabel $top={10}>Font Weight</FieldLabel>
              <Select>
                Normal
                <FaChevronDown />
              </Select>
              <FieldLabel>Social-Link-Block Size</FieldLabel>
              <SliderRow>
                <SliderTrack>
                  <SliderThumb />
                </SliderTrack>
                <UnitInput>
                  px
                  <Spinner />
                </UnitInput>
              </SliderRow>
              <FieldLabel>Text Align</FieldLabel>
              <SegmentGroup $cols="46px 46px 47px 48px">
                <Segment><AlignBlock $kind="left" /></Segment>
                <Segment><AlignBlock $kind="center" /></Segment>
                <Segment><AlignBlock $kind="right" /></Segment>
                <Segment><AlignBlock $kind="full" /></Segment>
              </SegmentGroup>
              <FieldLabel $bottom={6}>Capitalization</FieldLabel>
              <Select $h={18}>
                None
                <FaChevronDown />
              </Select>
              <FieldLabel $top={9}>Heading</FieldLabel>
              <Select>
                None
                <FaChevronDown />
              </Select>
              <FieldLabel>Text Decoration</FieldLabel>
              <SegmentGroup $cols="31px 30px 31px 47px 48px">
                <Segment $on><FaTimes size={8} /></Segment>
                <Segment><Overlined>a</Overlined></Segment>
                <Segment><Struck>S</Struck></Segment>
                <Segment><Underlined>U</Underlined></Segment>
                <Segment><BothLined>a</BothLined></Segment>
              </SegmentGroup>
              <FieldLabel $top={5} $bottom={6}>Text Style</FieldLabel>
              <SegmentGroup $cols="15px 15px" $w={30} $h={16}>
                <Segment $on>A</Segment>
                <Segment><i>I</i></Segment>
              </SegmentGroup>
              <FieldLabel>Color</FieldLabel>
              <ColorInput>
                #000
                <BlackSwatch />
              </ColorInput>
              <Palette>
                {palette.map((c) => (
                  <Swatch key={c} $color={c} />
                ))}
              </Palette>
            </StyleBody>
            <StyleFooter>
              <DeviceTab>
                <FaDesktop />
              </DeviceTab>
              <DeviceTab>
                <FaTabletAlt />
              </DeviceTab>
              <DeviceTab>
                <FaMobileAlt />
              </DeviceTab>
            </StyleFooter>
          </StylePanel>
        </Canvas>
      </Workspace>

      <Annotations width="1263" height="807" viewBox="0 0 1263 807" fill="none">
        <rect x="1" y="35" width="30" height="42" stroke="#f00000" strokeWidth="2" />
        <rect x="251" y="540" width="102" height="78" stroke="#f00000" strokeWidth="2" />
        <rect x="793" y="353" width="51" height="44" stroke="#ffff00" strokeWidth="2" />
        <path d="M338 570L686 284M672 287L687 283L682 296" stroke="#f00000" strokeWidth="2" />
        <path d="M773 323L758 186M755.500 197L758 184L764 196" stroke="#f00000" strokeWidth="2" />
        <path d="M951 199L912 202" stroke="#ffff00" strokeWidth="2" />
        <path d="M921 198L908 202.500L921 205z" fill="#ffff00" />
      </Annotations>
    </Page>
  );
};

export default App;
